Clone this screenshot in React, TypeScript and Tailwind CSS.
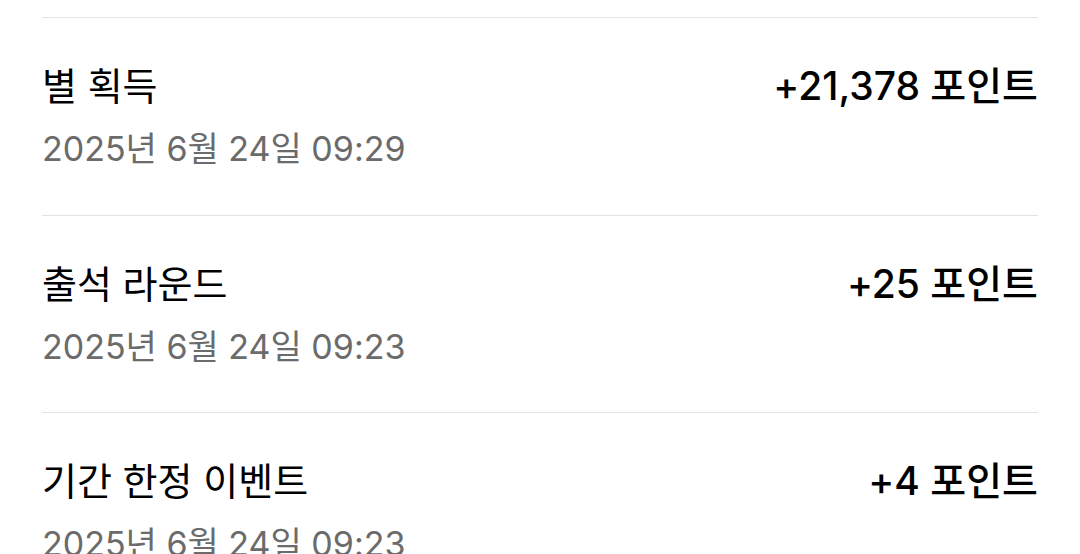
import React from "react";

const rows = [
  { title: "별 획득", date: "2025년 6월 24일 09:29", amount: "+21,378 포인트" },
  { title: "출석 라운드", date: "2025년 6월 24일 09:23", amount: "+25 포인트" },
  { title: "기간 한정 이벤트", date: "2025년 6월 24일 09:23", amount: "+4 포인트" },
];

export default function App() {
  return (
    <div
      className="w-[1080px] h-[554px] overflow-hidden bg-white"
      style={{ fontFamily: "Inter, 'Noto Sans CJK KR', sans-serif" }}
    >
      <div className="h-[17px]" />
      <div className="mx-[42px] flex flex-col">
        {rows.map((r) => (
          <div key={r.title + r.amount} className="h-[197.5px] border-t border-[#e4e4e4] pt-[45px]">
            <div className="flex items-start justify-between">
              <div className="flex flex-col">
                <span className="text-[38px] leading-[46px] text-black">{r.title}</span>
                <span className="mt-[20px] text-[34px] leading-[40px] text-[#6b6b6b]">{r.date}</span>
              </div>
              <span className="text-[39px] leading-[46px] font-medium text-black">{r.amount}</span>
            </div>
          </div>
        ))}
      </div>
    </div>
  );
}
